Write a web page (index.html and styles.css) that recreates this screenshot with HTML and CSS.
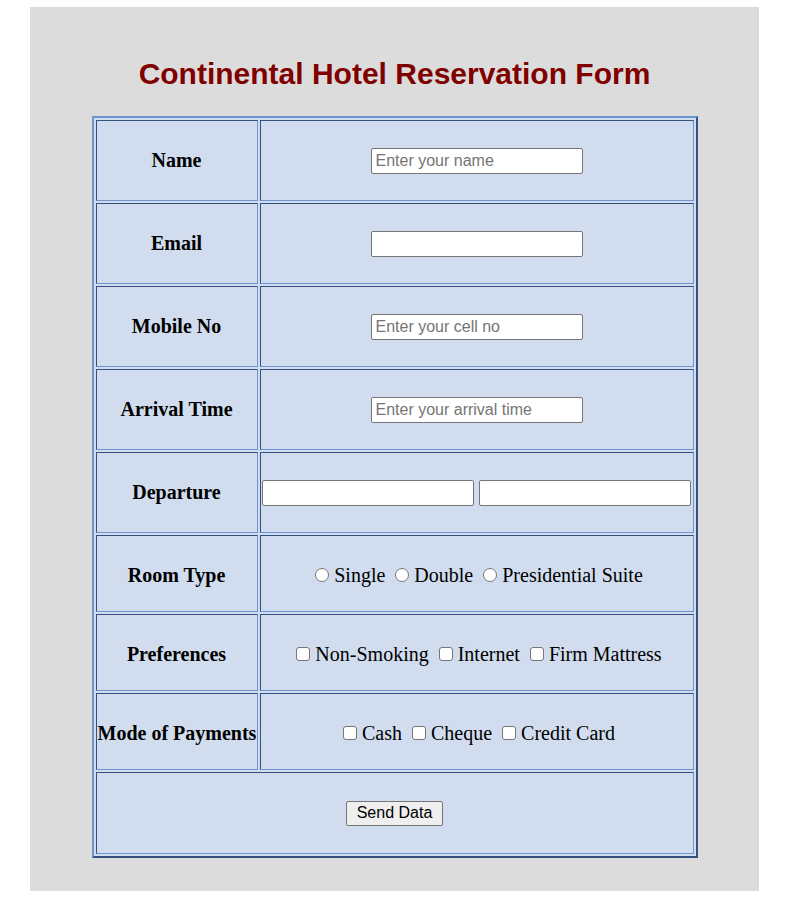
FILE: index.html
```html
<!DOCTYPE html>
<html>
<head>
<meta charset="utf-8">
<title>Continental Hotel Reservation Form</title>
<link rel="stylesheet" href="styles.css">
</head>
<body>
<div class="page">
  <h1 class="title">Continental Hotel Reservation Form</h1>
  <form class="form">
    <table class="res-table">
      <colgroup>
        <col class="label-col">
        <col class="value-col">
      </colgroup>
      <tr class="input-row">
        <th class="label">Name</th>
        <td class="value"><input class="field" type="text" placeholder="Enter your name"></td>
      </tr>
      <tr class="input-row">
        <th class="label">Email</th>
        <td class="value"><input class="field" type="text"></td>
      </tr>
      <tr class="input-row">
        <th class="label">Mobile No</th>
        <td class="value"><input class="field" type="text" placeholder="Enter your cell no"></td>
      </tr>
      <tr class="input-row">
        <th class="label">Arrival Time</th>
        <td class="value"><input class="field" type="text" placeholder="Enter your arrival time"></td>
      </tr>
      <tr class="input-row">
        <th class="label">Departure</th>
        <td class="value"><input class="field" type="text"> <input class="field" type="text"></td>
      </tr>
      <tr class="choice-row">
        <th class="label">Room Type</th>
        <td class="value"><input class="tick radio" type="radio" name="room"> Single <input class="tick radio" type="radio" name="room"> Double <input class="tick radio" type="radio" name="room"> Presidential Suite</td>
      </tr>
      <tr class="choice-row">
        <th class="label">Preferences</th>
        <td class="value"><input class="tick box" type="checkbox"> Non-Smoking <input class="tick box" type="checkbox"> Internet <input class="tick box" type="checkbox"> Firm Mattress</td>
      </tr>
      <tr class="choice-row">
        <th class="label">Mode of Payments</th>
        <td class="value"><input class="tick box" type="checkbox"> Cash <input class="tick box" type="checkbox"> Cheque <input class="tick box" type="checkbox"> Credit Card</td>
      </tr>
      <tr class="submit-row">
        <td class="value" colspan="2"><button class="send" type="button">Send Data</button></td>
      </tr>
    </table>
  </form>
</div>
</body>
</html>
```

FILE: styles.css
```css
html, body {
  margin: 0;
  padding: 0;
  background: #ffffff;
}

body {
  font-family: "Liberation Serif", "Times New Roman", serif;
  font-size: 20px;
  color: #000000;
}

.page {
  width: 729px;
  height: 884px;
  margin: 7px auto 0;
  background: #dcdcdc;
  padding-top: 46px;
  box-sizing: border-box;
}

.title {
  margin: 0 0 22px;
  text-align: center;
  font-family: "Liberation Sans", Arial, sans-serif;
  font-size: 30px;
  font-weight: bold;
  color: #800000;
  line-height: 41px;
}

.form {
  margin: 0;
}

.res-table {
  width: 606px;
  margin: 0 auto;
  table-layout: fixed;
  border-collapse: separate;
  border-spacing: 2px;
  background: #d1ddee;
  border: 2px solid;
  border-color: #6d95d2 #33507f #33507f #6d95d2;
}

.label-col {
  width: 162px;
}

.label,
.value {
  border: 1px solid;
  border-color: #33507f #6d95d2 #6d95d2 #33507f;
  padding: 0 1px;
  text-align: center;
  vertical-align: middle;
  background: #d1ddee;
  white-space: nowrap;
}

.input-row {
  height: 81px;
}

.choice-row {
  height: 77px;
}

.choice-row .label,
.choice-row .value {
  padding-top: 4px;
}

.submit-row {
  height: 82px;
}

.label {
  font-weight: bold;
  font-size: 20px;
}

.field {
  width: 212px;
  height: 26px;
  box-sizing: border-box;
  margin: 0;
  padding: 1px 4px;
  border: 1px solid #767676;
  border-radius: 2px;
  background: #ffffff;
  font-family: "Liberation Sans", Arial, sans-serif;
  font-size: 16px;
  vertical-align: middle;
}

.field::placeholder {
  color: #757575;
}

.tick {
  appearance: none;
  -webkit-appearance: none;
  width: 14px;
  height: 14px;
  box-sizing: border-box;
  margin: 3px 0 0 5px;
  border: 1px solid #767676;
  background: #ffffff;
  vertical-align: baseline;
}

.tick.radio {
  border-radius: 50%;
}

.tick.box {
  border-radius: 3px;
}

.send {
  font-family: "Liberation Sans", Arial, sans-serif;
  font-size: 16px;
  height: 25px;
  padding: 1px 10px;
  border: 1px solid #767676;
  border-radius: 2px;
  background: #efefef;
  color: #000000;
}
```
